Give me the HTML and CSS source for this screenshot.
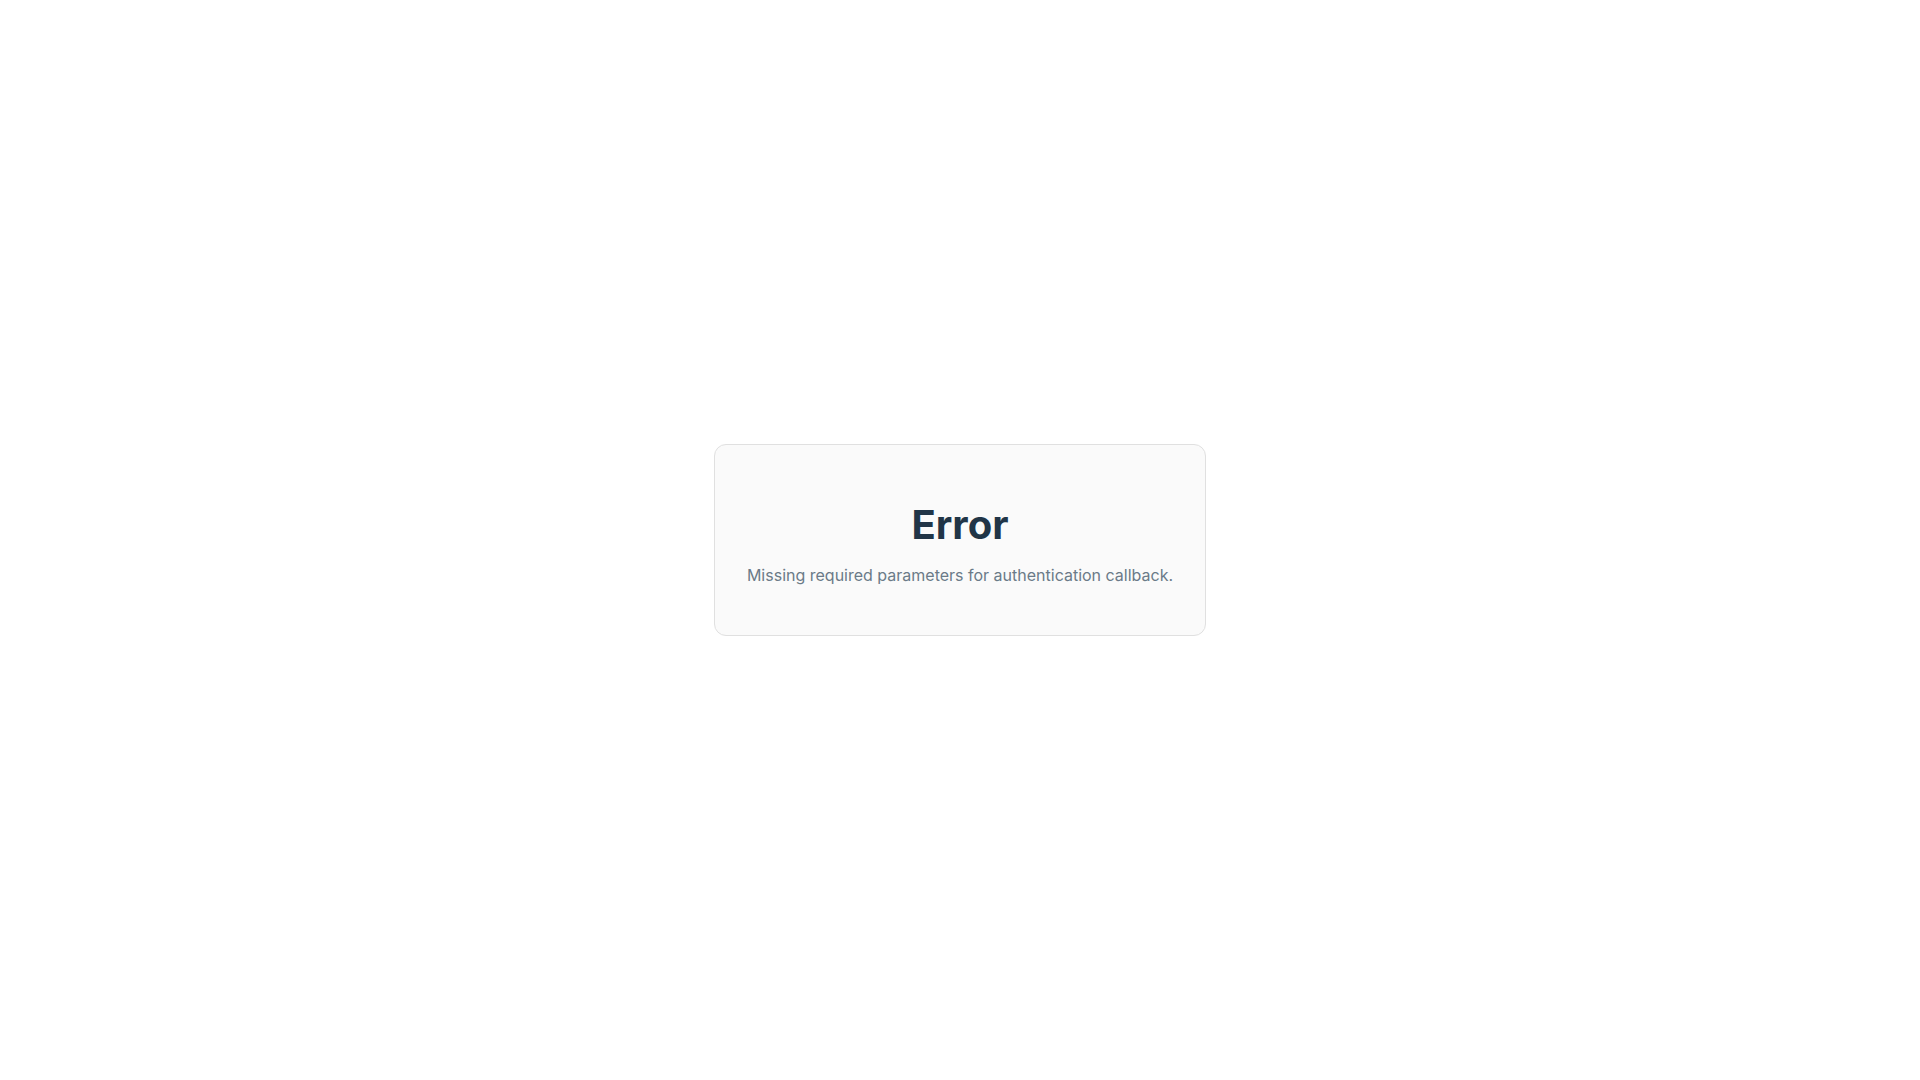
FILE: index.html
```
<!DOCTYPE html>
<html lang="en">
<head>
    <meta charset="UTF-8">
    <meta name="viewport" content="width=device-width, initial-scale=1.0">
    <title>Error</title>
    <link rel="stylesheet" href="styles.css">
</head>
<body>

    <main class="error-card">
        <h1 class="error-title">Error</h1>
        <p class="error-message">Missing required parameters for authentication callback.</p>
    </main>

</body>
</html>
```

FILE: styles.css
```
* {
    box-sizing: border-box;
}
body {
    font-family: Inter, sans-serif;
    margin: 0;
    min-height: 100vh;
    display: flex;
    justify-content: center;
    align-items: center;
    background-color: #ffffff;
}
.error-card {
    padding: 56px 32px 48px;
    border: 1px solid #e0e0e0;
    border-radius: 12px;
    background-color: #fafafa;
    text-align: center;
}
.error-title {
    margin: 0 0 14px;
    font-size: 40px;
    font-weight: 700;
    line-height: 48px;
    color: #213547;
}
.error-message {
    margin: 0;
    font-size: 16px;
    font-weight: 400;
    line-height: 24px;
    color: #6b7a88;
}
```
